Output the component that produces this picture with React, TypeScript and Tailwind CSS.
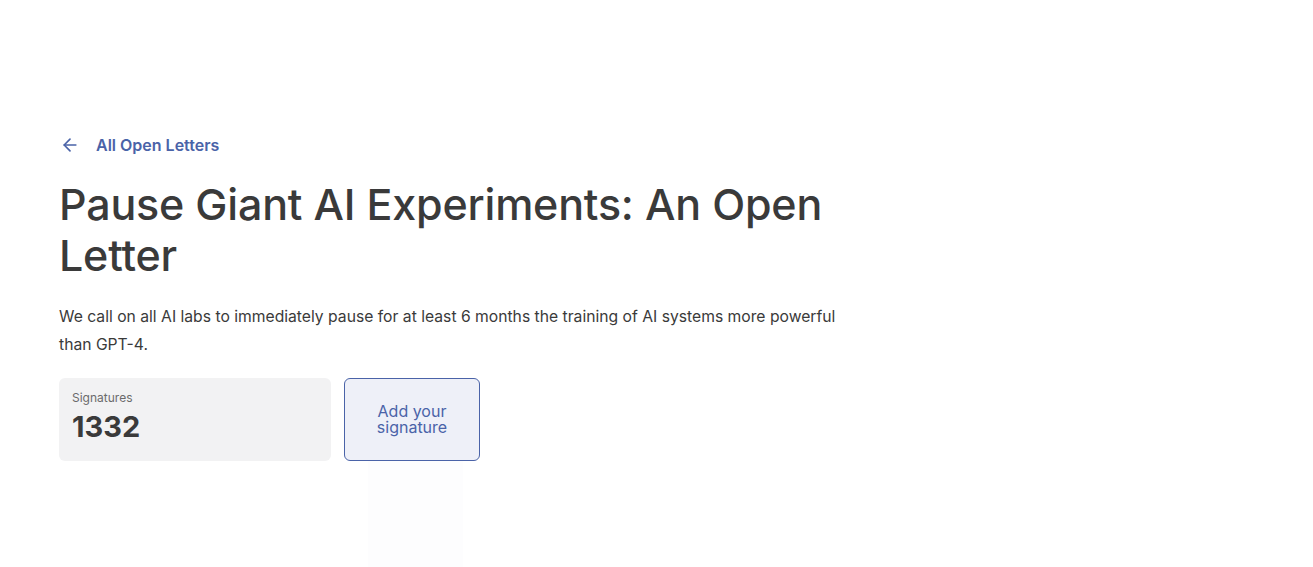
import React from "react";

export default function App() {
  return (
    <div className="min-h-[567px] w-full bg-white" style={{ fontFamily: "Inter, 'Noto Sans', sans-serif" }}>
      <div className="pl-[59px] pt-[132px]">
        <a className="flex items-center gap-[16px] text-[#4a63a8] h-[26px]" href="#">
          <svg width="20" height="20" viewBox="0 0 24 24" fill="none" stroke="currentColor" strokeWidth="2" strokeLinecap="round" strokeLinejoin="round" className="ml-[1px]">
            <path d="M19 12H5" />
            <path d="M12 19l-7-7 7-7" />
          </svg>
          <span className="text-[16px] font-semibold">All Open Letters</span>
        </a>
        <h1 className="mt-[21px] text-[43px] leading-[51px] font-medium text-[#3a3a3a] max-w-[800px] tracking-[-0.2px]">
          Pause Giant AI Experiments: An Open Letter
        </h1>
        <p className="mt-[22px] text-[15.7px] leading-[28px] text-[#3a3a3a] max-w-[790px]">
          We call on all AI labs to immediately pause for at least 6 months the training of AI systems more powerful than GPT-4.
        </p>
        <div className="mt-[19px] flex gap-[13px]">
          <div className="w-[272px] h-[83px] rounded-[6px] bg-[#f2f2f3] px-[13px] pt-[12px]">
            <div className="text-[12px] leading-[15px] text-[#6b6b6b]">Signatures</div>
            <div className="mt-[5px] text-[29px] leading-[34px] font-bold text-[#3a3a3a]">1332</div>
          </div>
          <div className="flex flex-col">
            <button className="w-[136px] h-[83px] rounded-[6px] border border-[#4a63a8] bg-[#eef0f8] text-[#4a63a8] text-[16px] leading-[16px] px-[20px] pb-[1px]">
              Add your signature
            </button>
            <div className="ml-[24px] w-[95px] h-[106px] bg-[#fdfdfe]" />
          </div>
        </div>
      </div>
    </div>
  );
}
